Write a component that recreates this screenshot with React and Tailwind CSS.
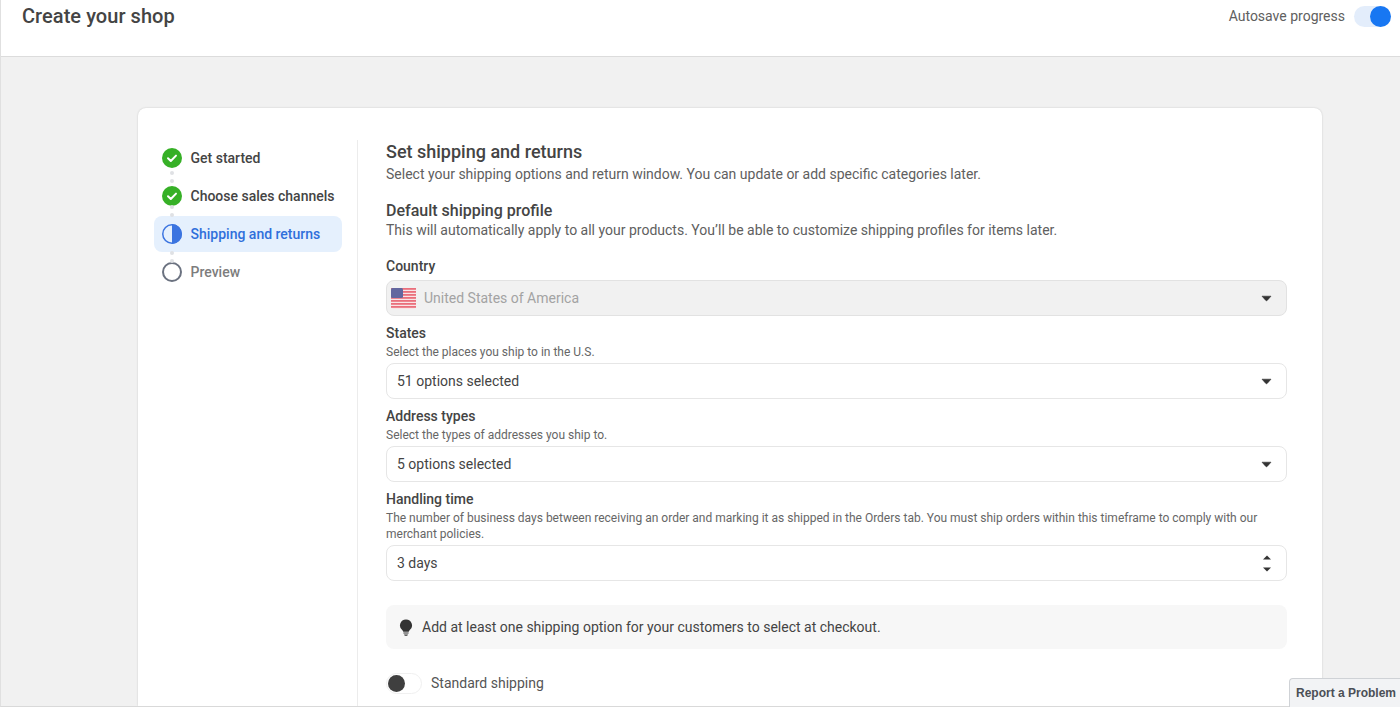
import React from 'react';

const Caret = () => (
  <svg width="11" height="7" viewBox="0 0 11 7" className="shrink-0">
    <path d="M1 1.200h9L6.200 5.400a1 1 0 0 1-1.400 0z" fill="#333" stroke="#333" strokeWidth="0.6" strokeLinejoin="round" />
  </svg>
);

const Stepper = () => (
  <svg width="10" height="19" viewBox="0 0 10 19" className="shrink-0">
    <path d="M5 1.500 9 5.500H1z" fill="#333" />
    <path d="M1 13.500h8L5 17.500z" fill="#333" />
  </svg>
);

const Check = () => (
  <svg width="20" height="20" viewBox="0 0 20 20" className="shrink-0">
    <circle cx="10" cy="10" r="10" fill="#36b026" />
    <path d="M6 10.300 8.800 13 14 7.600" fill="none" stroke="#fff" strokeWidth="2" strokeLinecap="round" strokeLinejoin="round" />
  </svg>
);

const HalfCircle = () => (
  <svg width="20" height="20" viewBox="0 0 20 20" className="shrink-0">
    <circle cx="10" cy="10" r="9.250" fill="none" stroke="#3b74e0" strokeWidth="1.500" />
    <path d="M10 0a10 10 0 0 1 0 20z" fill="#3b74e0" />
  </svg>
);

const EmptyCircle = () => (
  <svg width="20" height="20" viewBox="0 0 20 20" className="shrink-0">
    <circle cx="10" cy="10" r="9" fill="none" stroke="#6b7280" strokeWidth="2" />
  </svg>
);

const Dots = () => (
  <div className="flex flex-col items-center gap-[4px] w-5 h-[18px] justify-center">
    <span className="w-1 h-1 rounded-full bg-[#dfe1e4]" />
    <span className="w-1 h-1 rounded-full bg-[#dfe1e4]" />
  </div>
);

const UsFlag = () => (
  <svg width="25" height="21" viewBox="0 0 25 21" className="shrink-0">
    <rect x="0" y="0" width="25" height="21" rx="3" fill="#f9e4e6" />
    {[0, 3, 6, 9, 12, 15, 18].map((y) => (
      <rect key={y} x="0" y={y} width="25" height="1.800" fill="#ea6f7c" />
    ))}
    <rect x="0" y="0" width="12" height="10" rx="1.500" fill="#62679f" />
  </svg>
);

const Bulb = () => (
  <svg width="14" height="17" viewBox="0 0 14 17" className="shrink-0">
    <path d="M7 0.500a6 6 0 0 0-3.600 10.800c.5.400.7.900.8 1.400h5.600c.1-.5.3-1 .8-1.400A6 6 0 0 0 7 .5z" fill="#333" />
    <path d="M4.400 13.600h5.200v1H4.400zM5 15.400h4l-.8 1.300H5.800z" fill="#333" />
  </svg>
);

const Field = ({ label, help, value, icon, disabled, stepper }) => (
  <div>
    <div className="text-[14px] leading-[18px] font-medium text-[#444]">{label}</div>
    {help && <div className="text-[12px] leading-[16px] text-[#666] mt-[2px]">{help}</div>}
    <div className={`${help ? 'mt-[3px]' : 'mt-[5px]'} h-9 flex items-center justify-between border rounded-lg pr-[14px] ${disabled ? 'bg-[#f1f1f1] border-[#e2e2e2] pl-1' : 'bg-white border-[#e6e6e6] pl-[10px]'}`}>
      <div className="flex items-center gap-2">
        {icon}
        <span className={`text-[14px] ${disabled ? 'text-[#a3a3a3]' : 'text-[#444]'}`}>{value}</span>
      </div>
      {stepper ? <Stepper /> : <Caret />}
    </div>
  </div>
);

const App = () => {
  return (
    <div className="relative h-[714px] overflow-hidden bg-white font-['Roboto',sans-serif]">
      <div className="h-[707px] flex flex-col border-b border-[#d9d9d9] border-l border-l-[#e0e0e0]">
        {/* top bar */}
        <div className="h-[57px] shrink-0 bg-white border-b border-[#dcdcdc] flex items-start justify-between pl-[21px] pr-[1px]">
          <h1 className="text-[20px] leading-[32px] tracking-[0.05px] font-medium text-[#444]">Create your shop</h1>
          <div className="flex items-center gap-[9px] h-[32px]">
            <span className="text-[14px] text-[#606060]">Autosave progress</span>
            <div className="relative w-[37px] h-[21px] rounded-full bg-[#e3edfb] mr-[8px]">
              <span className="absolute right-0 top-0 w-[21px] h-[21px] rounded-full bg-[#1877f2]" />
            </div>
          </div>
        </div>

        <div className="flex-1 min-h-0 bg-[#f1f1f1] pt-[51px] pl-[137px] pr-[78px] overflow-hidden">
          <div className="h-full bg-white rounded-t-lg shadow-[0_0_2px_rgba(0,0,0,0.18)] flex pt-[32px] pl-4">
            {/* steps */}
            <div className="w-[204px] shrink-0 border-r border-[#ececec] pr-[15px]">
              <div className="flex items-center gap-[8.5px] h-5 pl-2 mt-[8px] text-[14px] font-medium text-[#444]"><Check />Get started</div>
              <div className="pl-2"><Dots /></div>
              <div className="flex items-center gap-[8.5px] h-5 pl-2 text-[14px] font-medium text-[#444]"><Check />Choose sales channels</div>
              <div className="pl-2 h-[10px] relative"><div className="absolute -top-1 z-10"><Dots /></div></div>
              <div className="flex items-center gap-[8.5px] h-9 pl-2 rounded-lg bg-[#e5f0fd] text-[14px] font-medium text-[#2f6fdb]"><HalfCircle />Shipping and returns</div>
              <div className="pl-2 h-[10px] relative"><div className="absolute -top-1"><Dots /></div></div>
              <div className="flex items-center gap-[8.5px] h-5 pl-2 text-[14px] font-medium text-[#7d7d7d]"><EmptyCircle />Preview</div>
            </div>

            {/* form */}
            <div className="w-[901px] ml-7 pt-[2px]">
              <h2 className="text-[18px] leading-[20px] font-medium text-[#444]">Set shipping and returns</h2>
              <p className="text-[14px] leading-[18px] mt-[3px] text-[#606060]">Select your shipping options and return window. You can update or add specific categories later.</p>
              <h3 className="text-[16px] leading-[20px] font-medium text-[#444] mt-[18px]">Default shipping profile</h3>
              <p className="text-[14px] leading-[18px] text-[#606060]">This will automatically apply to all your products. You’ll be able to customize shipping profiles for items later.</p>

              <div className="mt-[18px] flex flex-col gap-[8px]">
                <Field label="Country" value="United States of America" disabled icon={<UsFlag />} />
                <Field label="States" help="Select the places you ship to in the U.S." value="51 options selected" />
                <Field label="Address types" help="Select the types of addresses you ship to." value="5 options selected" />
                <Field
                  label="Handling time"
                  help="The number of business days between receiving an order and marking it as shipped in the Orders tab. You must ship orders within this timeframe to comply with our merchant policies."
                  value="3 days"
                  stepper
                />
              </div>

              <div className="mt-6 h-11 flex items-center gap-[9px] rounded-lg bg-[#f7f7f7] pl-[13px] text-[14px] text-[#444]">
                <Bulb />
                Add at least one shipping option for your customers to select at checkout.
              </div>

              <div className="mt-6 flex items-center gap-[9px]">
                <div className="relative w-9 h-[21px] rounded-full border border-[#f0f0f0] bg-white">
                  <span className="absolute -left-[1px] -top-[1px] w-[21px] h-[21px] p-[2px]">
                    <span className="block w-[17px] h-[17px] rounded-full bg-[#3f3f3f]" />
                  </span>
                </div>
                <span className="text-[14px] text-[#555]">Standard shipping</span>
              </div>
            </div>
          </div>
        </div>
      </div>

      <div className="absolute left-[1289px] top-[678px] w-[111px] h-[29px] bg-[#f2f3f5] border-t border-l border-[#cfd2d6] rounded-tl-sm flex items-center pl-[6px] font-['Liberation_Sans',sans-serif] text-[12px] font-bold text-[#4b4f56] whitespace-nowrap">
        Report a Problem
      </div>
    </div>
  );
};

export default App;
